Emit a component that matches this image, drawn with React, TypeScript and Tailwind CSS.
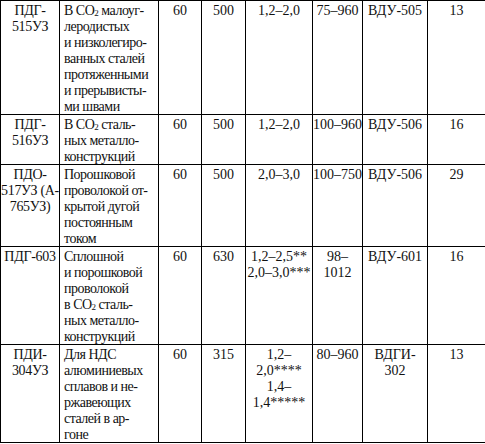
import React from "react";

type Row = {
  model: React.ReactNode;
  use: React.ReactNode;
  duty: string;
  current: string;
  wire: React.ReactNode;
  speed: React.ReactNode;
  source: React.ReactNode;
  mass: string;
};

const CO2 = (
  <>
    CO<sub className="text-[9px] relative top-[1px] align-baseline">2</sub>
  </>
);

const rows: Row[] = [
  {
    model: (
      <>
        ПДГ-
        <br />
        515УЗ
      </>
    ),
    use: (
      <>
        В {CO2} малоуг-
        <br />
        леродистых
        <br />
        и низколегиро-
        <br />
        ванных сталей
        <br />
        протяженными
        <br />
        и прерывисты-
        <br />
        ми швами
      </>
    ),
    duty: "60",
    current: "500",
    wire: "1,2–2,0",
    speed: "75–960",
    source: "ВДУ-505",
    mass: "13",
  },
  {
    model: (
      <>
        ПДГ-
        <br />
        516УЗ
      </>
    ),
    use: (
      <>
        В {CO2} сталь-
        <br />
        ных металло-
        <br />
        конструкций
      </>
    ),
    duty: "60",
    current: "500",
    wire: "1,2–2,0",
    speed: "100–960",
    source: "ВДУ-506",
    mass: "16",
  },
  {
    model: (
      <>
        ПДО-
        <br />
        517УЗ (А-
        <br />
        765УЗ)
      </>
    ),
    use: (
      <>
        Порошковой
        <br />
        проволокой от-
        <br />
        крытой дугой
        <br />
        постоянным
        <br />
        током
      </>
    ),
    duty: "60",
    current: "500",
    wire: "2,0–3,0",
    speed: "100–750",
    source: "ВДУ-506",
    mass: "29",
  },
  {
    model: "ПДГ-603",
    use: (
      <>
        Сплошной
        <br />
        и порошковой
        <br />
        проволокой
        <br />в {CO2} сталь-
        <br />
        ных металло-
        <br />
        конструкций
      </>
    ),
    duty: "60",
    current: "630",
    wire: (
      <>
        1,2–2,5**
        <br />
        2,0–3,0***
      </>
    ),
    speed: (
      <>
        98–
        <br />
        1012
      </>
    ),
    source: "ВДУ-601",
    mass: "16",
  },
  {
    model: (
      <>
        ПДИ-
        <br />
        304УЗ
      </>
    ),
    use: (
      <>
        Для НДС
        <br />
        алюминиевых
        <br />
        сплавов и не-
        <br />
        ржавеющих
        <br />
        сталей в ар-
        <br />
        гоне
      </>
    ),
    duty: "60",
    current: "315",
    wire: (
      <>
        1,2–
        <br />
        2,0****
        <br />
        1,4–
        <br />
        1,4*****
      </>
    ),
    speed: "80–960",
    source: (
      <>
        ВДГИ-
        <br />
        302
      </>
    ),
    mass: "13",
  },
];

const cell = "border border-black align-top text-center whitespace-nowrap px-0 pt-[1px] pb-0";

function C({ children, className = "" }: { children: React.ReactNode; className?: string }) {
  return (
    <td className={cell + " " + className}>
      <div className="relative top-[1px]">{children}</div>
    </td>
  );
}

export default function App() {
  return (
    <div className="w-[485px] h-[444px] bg-white text-[#111] font-['Liberation_Serif','Times_New_Roman',serif]">
      <table className="w-[485px] table-fixed border-collapse text-[14px] leading-4">
        <colgroup>
          <col className="w-[59px]" />
          <col className="w-[99px]" />
          <col className="w-[43px]" />
          <col className="w-[44px]" />
          <col className="w-[67px]" />
          <col className="w-[50px]" />
          <col className="w-[65px]" />
          <col className="w-[58px]" />
        </colgroup>
        <tbody>
          {rows.map((r, i) => (
            <tr key={i}>
              <C className="tracking-[-0.3px]">{r.model}</C>
              <C className="!text-left !pl-[4px] tracking-[-0.5px]">{r.use}</C>
              <C>{r.duty}</C>
              <C>{r.current}</C>
              <C>{r.wire}</C>
              <C>{r.speed}</C>
              <C>{r.source}</C>
              <C>{r.mass}</C>
            </tr>
          ))}
        </tbody>
      </table>
    </div>
  );
}
